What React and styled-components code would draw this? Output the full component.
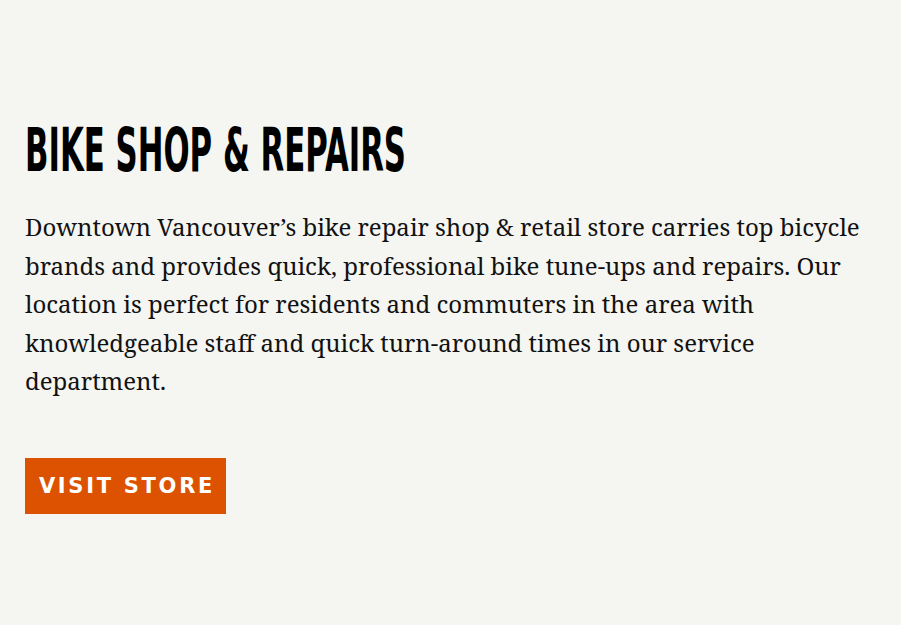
import React from "react";
import styled, { createGlobalStyle } from "styled-components";

const GlobalStyle = createGlobalStyle`
  html, body {
    margin: 0;
    padding: 0;
    background: #f5f5f1;
  }
`;

const Section = styled.section`
  box-sizing: border-box;
  width: 901px;
  min-height: 625px;
  padding: 118px 25px 0 25px;
  background: #f5f5f1;
`;

// condensed display heading (Bebas-like), squeezed horizontally
const Title = styled.h1`
  margin: 0;
  font-family: "DejaVu Sans", "Liberation Sans", sans-serif;
  font-weight: bold;
  font-size: 60px;
  line-height: 64px;
  color: #000;
  text-transform: uppercase;
  white-space: nowrap;
  transform: scaleX(0.513);
  transform-origin: left center;
`;

const Text = styled.p`
  margin: 26px 0 0 0;
  max-width: 850px;
  font-family: "Noto Serif", "DejaVu Serif", serif;
  font-size: 24px;
  line-height: 38.5px;
  color: #111;
`;

const Button = styled.a`
  display: inline-flex;
  align-items: center;
  justify-content: center;
  box-sizing: border-box;
  margin-top: 57px;
  padding-left: 3px;
  width: 201px;
  height: 56px;
  background: #dc5200;
  color: #fff;
  font-family: "DejaVu Sans", "Liberation Sans", sans-serif;
  font-weight: 700;
  font-size: 21px;
  letter-spacing: 2.7px;
  text-decoration: none;
`;

export default function App() {
  return (
    <>
      <GlobalStyle />
      <Section>
        <Title>Bike Shop &amp; Repairs</Title>
        <Text>
          Downtown Vancouver’s bike repair shop &amp; retail store carries top bicycle
          brands and provides quick, professional bike tune-ups and repairs. Our
          location is perfect for residents and commuters in the area with
          knowledgeable staff and quick turn-around times in our service
          department.
        </Text>
        <Button href="#">VISIT STORE</Button>
      </Section>
    </>
  );
}
